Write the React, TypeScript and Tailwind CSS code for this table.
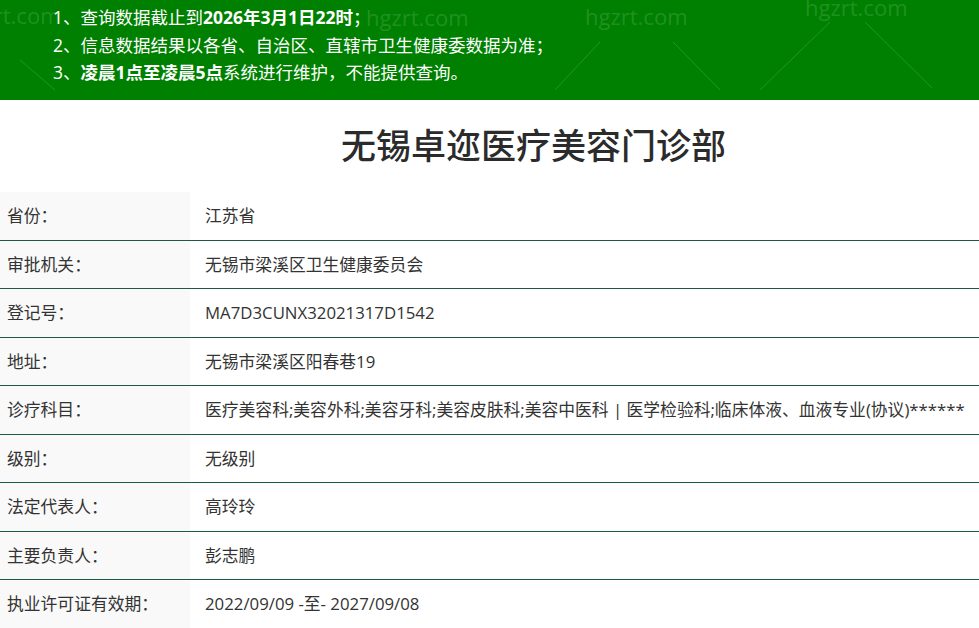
import React from 'react';

const rows = [
    {label: '省份：', value: '江苏省'},
    {label: '审批机关：', value: '无锡市梁溪区卫生健康委员会'},
    {label: '登记号：', value: 'MA7D3CUNX32021317D1542'},
    {label: '地址：', value: '无锡市梁溪区阳春巷19'},
    {label: '诊疗科目：', value: '医疗美容科;美容外科;美容牙科;美容皮肤科;美容中医科 | 医学检验科;临床体液、血液专业(协议)******'},
    {label: '级别：', value: '无级别'},
    {label: '法定代表人：', value: '高玲玲'},
    {label: '主要负责人：', value: '彭志鹏'},
    {label: '执业许可证有效期：', value: '2022/09/09 -至- 2027/09/08'},
];

export default function App() {
    return (
        <div className="w-[979px] h-[628px] overflow-hidden bg-white font-['Open_Sans','Noto_Sans_CJK_SC',sans-serif] text-[#333]">
            <div className="relative h-[100px] bg-[#008000] pl-[53px] pt-[4px] text-[17.5px] leading-[27.5px] text-white overflow-hidden">
                {/* watermark */}
                <div className="absolute inset-0 pointer-events-none text-[22px] text-white/15">
                    <span className="absolute left-[-42px] top-[2px]">hgzrt.com</span>
                    <span className="absolute left-[366px] top-[4px]">hgzrt.com</span>
                    <span className="absolute left-[585px] top-[3px]">hgzrt.com</span>
                    <span className="absolute left-[805px] top-[-6px]">hgzrt.com</span>
                    <svg className="absolute inset-0" width="979" height="100">
                        <g stroke="rgba(255,255,255,0.15)" strokeWidth="1">
                            <line x1="555" y1="90" x2="600" y2="42"/>
                            <line x1="673" y1="42" x2="720" y2="90"/>
                            <line x1="760" y1="90" x2="830" y2="22"/>
                            <line x1="865" y1="22" x2="932" y2="88"/>
                            <line x1="20" y1="60" x2="55" y2="90"/>
                        </g>
                    </svg>
                </div>
                <div className="relative">
                    <p>1、查询数据截止到<b>2026年3月1日22时</b>；</p>
                    <p>2、信息数据结果以各省、自治区、直辖市卫生健康委数据为准；</p>
                    <p>3、<b>凌晨1点至凌晨5点</b>系统进行维护，不能提供查询。</p>
                </div>
            </div>
            <h1 className="h-[92px] flex items-center justify-center pl-[88px] text-[35px] font-medium text-[#2b2b2b]">
                无锡卓迩医疗美容门诊部
            </h1>
            <div className="flex flex-col text-[16.8px]">
                {rows.map((row, index) => (
                    <div key={index} className="flex h-[48.5px] border-b border-[#1e5a3f]">
                        <div className="w-[190px] shrink-0 bg-[#f9f9f9] pl-[7px] flex items-center">
                            {row.label}
                        </div>
                        <div className="flex-1 pl-[15px] flex items-center whitespace-nowrap overflow-hidden">
                            {row.value}
                        </div>
                    </div>
                ))}
            </div>
        </div>
    );
}
